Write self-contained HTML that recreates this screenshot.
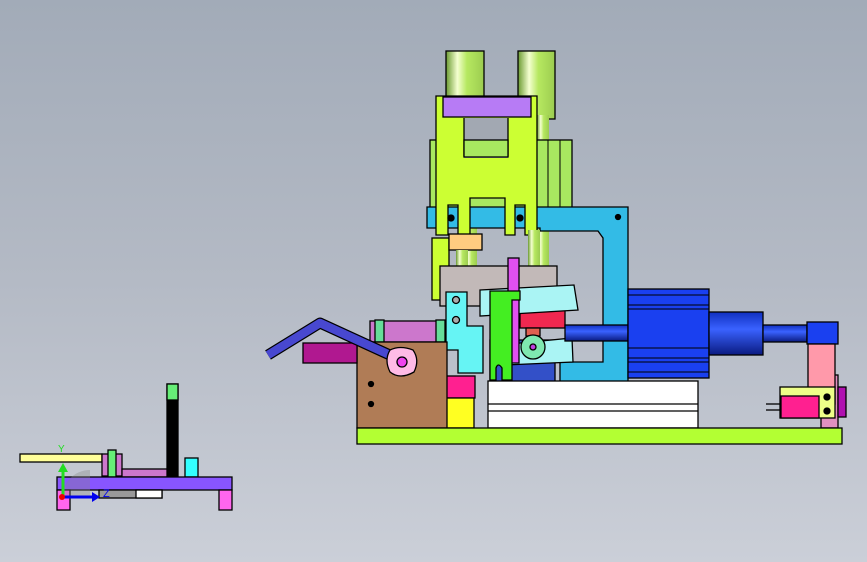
<!DOCTYPE html>
<html><head><meta charset="utf-8"><style>
html,body{margin:0;padding:0;width:867px;height:562px;overflow:hidden}
body{background:linear-gradient(#a2abb8,#b4bac5 50%,#cbcfd8)}
svg{position:absolute;left:0;top:0}
</style></head><body>
<svg width="867" height="562" viewBox="0 0 867 562" stroke="#000" stroke-width="1.3">
<defs>
<linearGradient id="col" x1="0" x2="1"><stop offset="0" stop-color="#6a9a30"/><stop offset=".3" stop-color="#f4ffd0"/><stop offset=".55" stop-color="#b6e860"/><stop offset="1" stop-color="#9ccc50"/></linearGradient>
<linearGradient id="mot" x1="0" y1="0" x2="0" y2="1"><stop offset="0" stop-color="#1030c0"/><stop offset=".4" stop-color="#3a62ff"/><stop offset="1" stop-color="#0a1a80"/></linearGradient>
</defs>
<rect x="446" y="51" width="38" height="110" fill="url(#col)"/>
<rect x="518" y="51" width="37" height="68" fill="url(#col)"/>
<rect x="465" y="115" width="12" height="160" fill="url(#col)" stroke="none"/>
<rect x="537" y="115" width="12" height="160" fill="url(#col)" stroke="none"/>
<rect x="430" y="140" width="142" height="70" fill="#a8e860"/>
<g stroke-width="1"><line x1="440" y1="140" x2="440" y2="210"/><line x1="560" y1="140" x2="560" y2="210"/><line x1="548" y1="140" x2="548" y2="210"/></g>
<path d="M427 207 H628 V382 H560 V362 H603 V238 L598 231 H540 V228 H427 Z" fill="#33bbe6"/>
<path d="M436 96 H537 V235 H525 V205 H515 V235 H505 V198 H470 V235 H458 V205 H448 V235 H436 Z" fill="#ccff33"/>
<rect x="443" y="97" width="88" height="20" fill="#b77bf5"/>
<rect x="464" y="118" width="44" height="40" fill="#a2a8b2" stroke="none"/>
<path d="M464 118 V156 H508 V118" fill="none"/>
<rect x="464" y="140" width="44" height="17" fill="#a8e860"/>
<circle cx="451" cy="218" r="3" fill="#000"/><circle cx="520" cy="218" r="3" fill="#000"/><circle cx="618" cy="217" r="2.5" fill="#000"/>
<rect x="432" y="238" width="17" height="62" fill="#ccff33"/>
<rect x="449" y="234" width="33" height="16" fill="#ffcc80"/>
<rect x="456" y="250" width="12" height="20" fill="url(#col)" stroke="none"/>
<rect x="528" y="230" width="12" height="40" fill="url(#col)" stroke="none"/>
<rect x="440" y="266" width="117" height="40" fill="#c2b9b8"/>
<rect x="490" y="340" width="65" height="42" fill="#3350c8"/>
<rect x="520" y="300" width="45" height="28" fill="#f02850"/>
<rect x="526" y="328" width="14" height="8" fill="#e06050"/>
<path d="M480 290 L574 285 L578 310 L480 316 Z" fill="#aaf4f4"/>
<path d="M500 345 L572 338 L573 362 L505 365 Z" fill="#aaf4f4"/>
<circle cx="533" cy="347" r="12" fill="#7fe8b0"/><circle cx="533" cy="347" r="3" fill="#c040e0"/>
<rect x="508" y="258" width="11" height="105" fill="#e050f0"/>
<path d="M490 291 H520 V300 H512 V380 H502 V368 Q498 362 496 368 V380 H490 Z" fill="#44ee22"/>
<path d="M446 292 H467 V326 H483 V373 H458 V350 H446 Z" fill="#66f4f4"/>
<circle cx="456" cy="300" r="3.5" fill="#aaa"/><circle cx="456" cy="320" r="3.5" fill="#aaa"/>
<rect x="565" y="325" width="63" height="16" fill="url(#mot)"/>
<rect x="628" y="289" width="81" height="89" fill="#1a40f0"/>
<g stroke-width="1"><line x1="628" y1="295" x2="709" y2="295"/><line x1="628" y1="305" x2="709" y2="305"/><line x1="628" y1="309" x2="709" y2="309"/><line x1="628" y1="348" x2="709" y2="348"/><line x1="628" y1="358" x2="709" y2="358"/><line x1="628" y1="362" x2="709" y2="362"/><line x1="628" y1="372" x2="709" y2="372"/></g>
<rect x="709" y="312" width="54" height="43" fill="url(#mot)"/>
<rect x="763" y="325" width="44" height="17" fill="url(#mot)"/>
<rect x="807" y="322" width="31" height="22" fill="#1a40f0"/>
<rect x="821" y="375" width="17" height="53" fill="#e090c0"/>
<rect x="838" y="387" width="8" height="30" fill="#b010b0"/>
<rect x="808" y="344" width="27" height="60" fill="#ff99aa"/>
<rect x="780" y="387" width="55" height="31" fill="#eeff88"/>
<rect x="781" y="396" width="38" height="22" fill="#ff2090"/>
<circle cx="827" cy="397" r="3" fill="#000"/><circle cx="827" cy="411" r="3" fill="#000"/>
<line x1="766" y1="404" x2="781" y2="404"/><line x1="766" y1="410" x2="781" y2="410"/>
<rect x="488" y="381" width="210" height="47" fill="#fff"/>
<line x1="488" y1="404" x2="698" y2="404"/><line x1="488" y1="411" x2="698" y2="411"/>
<rect x="446" y="376" width="29" height="22" fill="#ff2090"/>
<rect x="446" y="398" width="28" height="30" fill="#ffff22"/>
<rect x="370" y="321" width="75" height="21" fill="#cc77cc"/>
<rect x="375" y="320" width="9" height="22" fill="#66dd99"/>
<rect x="436" y="320" width="9" height="22" fill="#66dd99"/>
<rect x="357" y="342" width="90" height="86" fill="#b07c56"/>
<circle cx="371" cy="384" r="2.5" fill="#000"/><circle cx="371" cy="404" r="2.5" fill="#000"/>
<rect x="303" y="343" width="54" height="20" fill="#b01890"/>
<path d="M268 355 L320 323 L392 356" fill="none" stroke="#000" stroke-width="11" stroke-linejoin="round"/>
<path d="M268 355 L320 323 L392 356" fill="none" stroke="#4848d0" stroke-width="8.5" stroke-linejoin="round"/>
<path d="M390 350 Q400 345 413 350 Q420 360 414 372 Q400 380 390 372 Q384 360 390 350 Z" fill="#ffbbe6"/>
<circle cx="402" cy="362" r="5" fill="#ee44ee"/>
<rect x="357" y="428" width="485" height="16" fill="#b3ff33"/>
<rect x="167" y="384" width="11" height="93" fill="#000"/>
<rect x="167" y="384" width="11" height="16" fill="#66ee77"/>
<rect x="20" y="454" width="82" height="8" fill="#ffff99"/>
<rect x="102" y="454" width="20" height="22" fill="#cc77cc"/>
<rect x="122" y="469" width="45" height="8" fill="#cc77cc"/>
<rect x="108" y="450" width="8" height="27" fill="#66ee77"/>
<rect x="185" y="458" width="13" height="19" fill="#33ffff"/>
<rect x="57" y="477" width="175" height="13" fill="#8855ff"/>
<rect x="57" y="490" width="13" height="20" fill="#ff66ee"/>
<rect x="219" y="490" width="13" height="20" fill="#ff66ee"/>
<rect x="99" y="490" width="63" height="8" fill="#999"/>
<rect x="136" y="490" width="26" height="8" fill="#fff"/>
<path d="M62 498 A28 28 0 0 1 90 470 L90 498 Z" fill="#888" fill-opacity=".35" stroke="none"/>
<line x1="63" y1="497" x2="63" y2="470" stroke="#22dd22" stroke-width="3"/>
<path d="M58 472 L63 463 L68 472 Z" fill="#22dd22" stroke="none"/>
<line x1="63" y1="497" x2="92" y2="497" stroke="#0000ee" stroke-width="3"/>
<path d="M92 492 L100 497 L92 502 Z" fill="#0000ee" stroke="none"/>
<circle cx="62" cy="497" r="3" fill="#ee0000" stroke="none"/>
<text x="58" y="452" font-family="Liberation Sans,sans-serif" font-size="10" fill="#22dd22" stroke="none">Y</text>
<text x="103" y="497" font-family="Liberation Sans,sans-serif" font-size="11" fill="#0000ee" stroke="none">Z</text>
</svg>
</body></html>
